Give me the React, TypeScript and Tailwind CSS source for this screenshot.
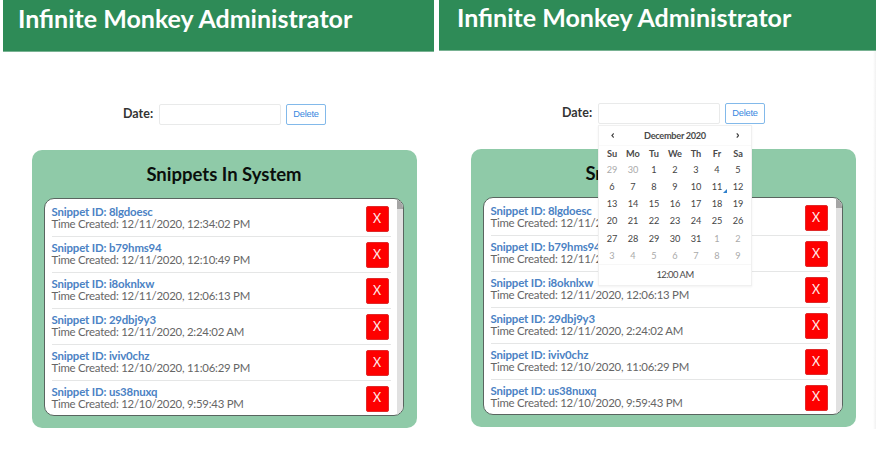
const snippets = [
  { id: '8lgdoesc', created: '12/11/2020, 12:34:02 PM' },
  { id: 'b79hms94', created: '12/11/2020, 12:10:49 PM' },
  { id: 'i8oknlxw', created: '12/11/2020, 12:06:13 PM' },
  { id: '29dbj9y3', created: '12/11/2020, 2:24:02 AM' },
  { id: 'iviv0chz', created: '12/10/2020, 11:06:29 PM' },
  { id: 'us38nuxq', created: '12/10/2020, 9:59:43 PM' },
];

const weekdays = ['Su', 'Mo', 'Tu', 'We', 'Th', 'Fr', 'Sa'];

// Six weeks starting on Sunday 29 November 2020.
const days = Array.from({ length: 42 }, (_, i) => {
  if (i < 2) return { n: 29 + i, muted: true };
  if (i < 33) return { n: i - 1, muted: false };
  return { n: i - 32, muted: true };
});

function Chevron({ d }: { d: string }) {
  return (
    <svg viewBox="0 0 4 6" className="h-[5px] w-[3.5px] fill-none stroke-[#444] stroke-[1.4]">
      <path d={d} />
    </svg>
  );
}

function Calendar() {
  return (
    <div className="absolute left-0 top-[22px] z-10 w-[154px] border border-[#f0f0f0] bg-white text-[#4a4a4a] shadow-[0_1px_2px_rgba(34,36,38,0.06)]">
      <div className="grid h-[20px] grid-cols-[27px_1fr_27px] items-center border-b border-[#f9f9f9] text-center text-[9.2px] leading-none">
        <div className="flex justify-center"><Chevron d="M3.2 .5 1 3 3.2 5.5" /></div>
        <span className="font-bold tracking-[-0.3px] text-[#4a4a4a]">December 2020</span>
        <div className="flex justify-center"><Chevron d="M.8 .5 3 3 .8 5.5" /></div>
      </div>
      <div className="grid h-[15px] grid-cols-7 items-center px-[2.5px] text-center text-[9.2px] leading-none font-bold">
        {weekdays.map((d) => <span key={d}>{d}</span>)}
      </div>
      <div className="grid h-[103px] grid-cols-7 grid-rows-6 items-center px-[2.5px] text-center text-[9.2px] leading-none">
        {days.map((d, i) => (
          <span key={i} className={d.muted ? 'text-[#aaa]' : 'relative text-[#444]'}>
            {d.n}
            {i === 12 && (
              <svg viewBox="0 0 4 4" className="absolute right-[1px] -bottom-[2px] h-1 w-1 fill-[#2f80cc]">
                <path d="M4 0V4H0Z" />
              </svg>
            )}
          </span>
        ))}
      </div>
      <div className="flex h-[21px] items-center justify-center border-t border-[#f7f7f7] pb-[1px] text-[9.4px] leading-none tracking-[-0.5px]">12:00 AM</div>
    </div>
  );
}

function Administrator({ open = false }: { open?: boolean }) {
  return (
    <section className="w-[437px]">
      <header className={open ? 'h-[51px] border-b border-[#78b292] bg-[#2e8b57] pt-[2px] pl-[18px]' : 'mr-[3px] ml-[3px] h-[52px] border-b border-[#78b292] bg-[#2e8b57] pt-[3px] pl-[15px]'}>
        <h1 className="text-[25px] leading-[30px] font-bold whitespace-nowrap text-white">Infinite Monkey Administrator</h1>
      </header>
      <div className="mt-[52px] ml-[123px] flex h-[21px] items-center">
        <label className="w-[36px] pb-px text-[12.5px] leading-none font-bold whitespace-nowrap text-[#333]">Date:</label>
        <div className="relative h-[21px] w-[122px]">
          <div className="h-[21px] rounded-[2px] border border-[#e9eaea] bg-white" />
          {open && <Calendar />}
        </div>
        <button className="ml-[5px] h-[21px] w-[40px] rounded-[2px] border border-[#82b9ea] bg-white font-['Liberation_Sans',Arial,sans-serif] text-[9.3px] leading-none tracking-[-0.25px] text-[#3987e0]">Delete</button>
      </div>
      <main className="mt-[25px] ml-[32px] h-[278px] w-[385px] rounded-[10px] bg-[#8fcaa8] pt-[12px] pl-[12px]">
        <h2 className="mb-[11px] h-[25px] w-[360px] text-center text-[18.5px] leading-[25px] font-bold text-[#0a0f0c]">Snippets In System</h2>
        <div className="flex h-[218px] w-[360px] overflow-hidden rounded-[10px] border border-[#59655f] bg-white">
          <ul className="w-[352px] pt-[2px] pr-[6px] pl-[6.5px]">
            {snippets.map((s) => (
              <li key={s.id} className="flex h-[35.95px] items-start justify-between border-b border-[#e5e6e6] pt-[5px] pr-[2.5px] last:border-transparent">
                <div className="text-[11.4px] leading-[12px] whitespace-nowrap">
                  <div className="font-bold tracking-[-0.15px] text-[#4b82c4]">Snippet ID: {s.id}</div>
                  <div className="tracking-[-0.24px] text-[#666]">Time Created: {s.created}</div>
                </div>
                <button className="h-[26px] w-[23px] rounded-[2px] border border-[#e02a2a] bg-[#fe0000] text-[12.5px] leading-none text-[#ffeaea]">X</button>
              </li>
            ))}
          </ul>
          <div className="w-[6px] shrink-0 bg-[#e1e1e1]"><div className="h-[10px] bg-[#a5a5a5]" /></div>
        </div>
      </main>
    </section>
  );
}

export default function App() {
  return (
    <div className="relative flex h-[451px] w-[876px] overflow-hidden bg-white font-[Lato,sans-serif]">
      <Administrator />
      <div className="w-[2px] shrink-0" />
      <Administrator open />
      <div className="absolute top-[51px] right-0 h-[378px] w-[3px] bg-linear-to-r from-white to-[#f1f1f1]" />
    </div>
  );
}
